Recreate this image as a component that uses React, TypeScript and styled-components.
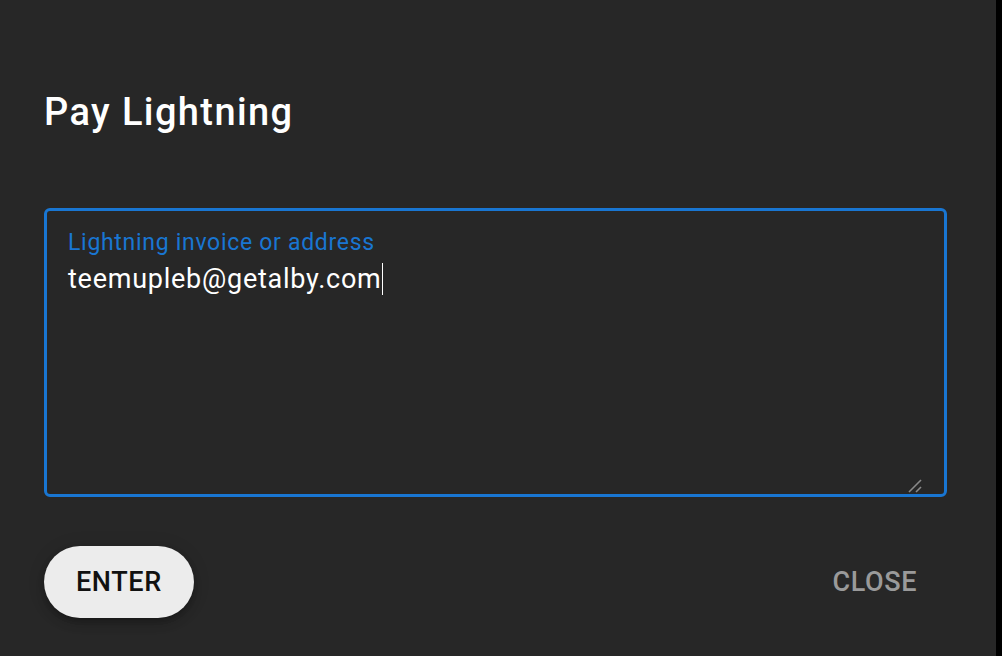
import { FunctionComponent } from "react";
import styled, { createGlobalStyle } from "styled-components";

const GlobalStyle = createGlobalStyle`
  html, body {
    margin: 0;
    padding: 0;
    background: #000;
    height: 100%;
    overflow: hidden;
  }
  body {
    font-family: Roboto, "Liberation Sans", Arial, sans-serif;
  }
`;

const Dialog = styled.div`
  width: 996px;
  height: 656px;
  box-sizing: border-box;
  background: #272727;
  padding: 89px 49px 0 44px;
  display: flex;
  flex-direction: column;
`;

const Title = styled.h2`
  margin: 0;
  font-size: 38px;
  line-height: 46px;
  font-weight: 500;
  letter-spacing: 1.4px;
  color: #fff;
`;

const Field = styled.div`
  position: relative;
  margin-top: 73px;
  height: 289px;
  box-sizing: border-box;
  border: 3px solid #1976d2;
  border-radius: 6px;
  padding: 19px 19px 0 21px;
  display: flex;
  flex-direction: column;
  gap: 7px;
`;

const Label = styled.label`
  font-size: 23px;
  line-height: 26px;
  letter-spacing: 0.7px;
  color: #1976d2;
`;

const Value = styled.div`
  font-size: 27px;
  line-height: 32px;
  letter-spacing: 0.75px;
  color: #fff;
  display: flex;
  align-items: stretch;
`;

const Caret = styled.span`
  width: 1.5px;
  background: #fff;
`;

const Grip = styled.svg`
  position: absolute;
  right: 22px;
  bottom: 1px;
`;

const Actions = styled.div`
  margin-top: 49px;
  display: flex;
  justify-content: space-between;
  align-items: center;
`;

const Button = styled.button<{ $variant: "filled" | "text" }>`
  height: 72px;
  padding: ${(p) => (p.$variant === "filled" ? "0 32px" : "0 30px 0 32px")};
  border: none;
  border-radius: 36px;
  font-family: Roboto, "Liberation Sans", Arial, sans-serif;
  font-size: 27px;
  font-weight: 500;
  letter-spacing: 0.6px;
  text-transform: uppercase;
  cursor: pointer;
  background: ${(p) => (p.$variant === "filled" ? "#ececec" : "transparent")};
  color: ${(p) => (p.$variant === "filled" ? "#111" : "#9a9a9a")};
  box-shadow: ${(p) =>
    p.$variant === "filled"
      ? "0 3px 5px -1px rgba(0,0,0,.2), 0 6px 10px 0 rgba(0,0,0,.14), 0 1px 18px 0 rgba(0,0,0,.12)"
      : "none"};
`;

const App: FunctionComponent = () => {
  return (
    <>
      <GlobalStyle />
      <Dialog>
        <Title>Pay Lightning</Title>
        <Field>
          <Label>Lightning invoice or address</Label>
          <Value>
            teemupleb@getalby.com
            <Caret />
          </Value>
          <Grip width="14" height="14" viewBox="0 0 14 14">
            <line x1="1" y1="13" x2="13" y2="1" stroke="#8a8a8a" strokeWidth="1.6" />
            <line x1="8" y1="13" x2="13" y2="8" stroke="#8a8a8a" strokeWidth="1.6" />
          </Grip>
        </Field>
        <Actions>
          <Button $variant="filled">Enter</Button>
          <Button $variant="text">Close</Button>
        </Actions>
      </Dialog>
    </>
  );
};

export default App;
